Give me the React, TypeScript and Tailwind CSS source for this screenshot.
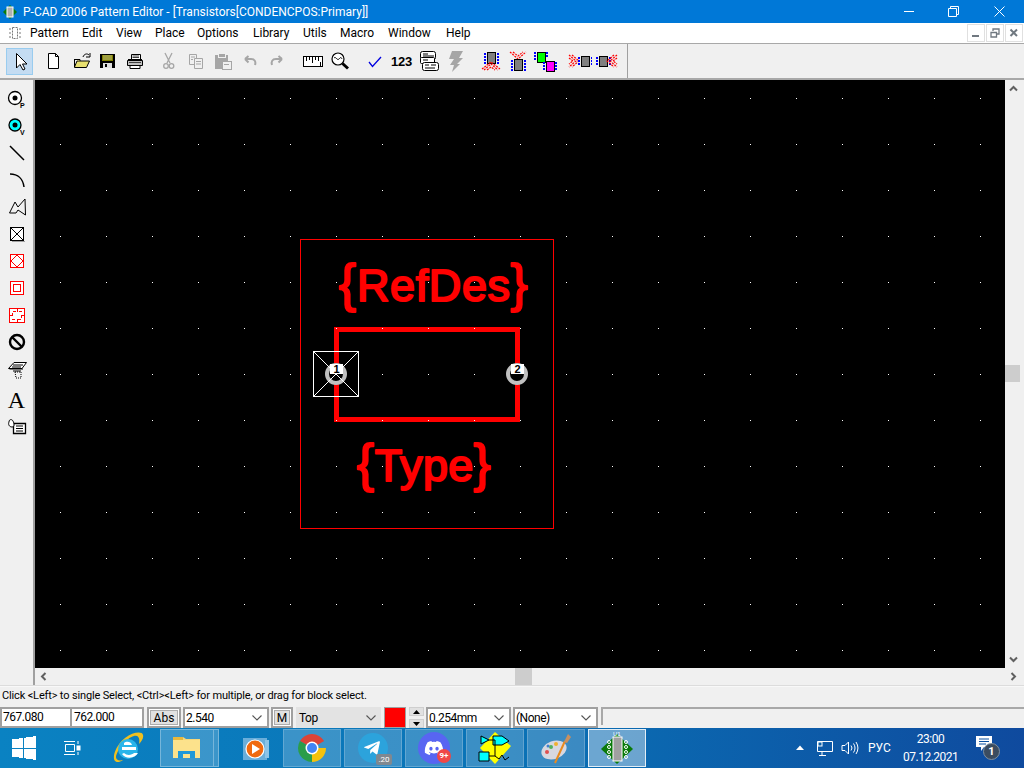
import React from "react";
import { FaDiscord, FaTelegramPlane } from "react-icons/fa";

const Ic = ({ children, w = 24 }: { children: React.ReactNode; w?: number }) => (
  <svg width={w} height={24} viewBox={`0 0 ${w} 24`} className="block">{children}</svg>
);

const Chip = ({ x, y, w = 8, h = 11, fill = "#808080", dot = "#0000ff" }: { x: number; y: number; w?: number; h?: number; fill?: string; dot?: string }) => (
  <g shapeRendering="crispEdges">
    <rect x={x} y={y} width={w} height={h} fill={fill} stroke="#000" />
    {[1, 4, 7, 10].filter((d) => d < h).map((d) => (
      <g key={d}>
        <rect x={x - 3} y={y + d} width={2} height={2} fill={dot} />
        <rect x={x + w + 2} y={y + d} width={2} height={2} fill={dot} />
      </g>
    ))}
  </g>
);

const Chevrons = ({ pts, }: { pts: string[] }) => (
  <g fill="none" stroke="#ff0000" strokeWidth="1.200" strokeDasharray="2 1">
    {pts.map((p) => <polyline key={p} points={p} />)}
  </g>
);

const top: React.ReactNode[] = [
  <Ic key="new"><path d="M6.500 4.500H13.500L16.500 7.500V19.500H6.500Z" fill="#fff" stroke="#000" /><path d="M13.500 4.500V7.500H16.500" fill="none" stroke="#000" /></Ic>,
  <Ic key="open">
    <path d="M5.500 10V18.500H17.500L20.500 12H8L5.500 18" fill="#e8e070" stroke="#000" />
    <path d="M5.500 10.500H11V12" fill="#c0b040" stroke="#000" />
    <path d="M14 8C15 5 18 4 20 6" fill="none" stroke="#000" /><path d="M21 4V8H17" fill="none" stroke="#000" />
  </Ic>,
  <Ic key="save">
    <g shapeRendering="crispEdges"><rect x="4" y="5" width="15" height="14" fill="#000" /><rect x="6" y="6" width="11" height="6" fill="#808000" /><rect x="7" y="6" width="9" height="5" fill="#a0a040" /><rect x="7" y="14" width="9" height="5" fill="#e0e0e0" /><rect x="9" y="15" width="2" height="3" fill="#000" /></g>
  </Ic>,
  <Ic key="print">
    <path d="M8.500 5.500H17.500V10.500H8.500Z" fill="#fff" stroke="#000" />
    <path d="M4.500 11.500H19.500V16.500H4.500Z" fill="#c0c0c0" stroke="#000" /><path d="M5 10.500H19" stroke="#000" />
    <path d="M7 16.500H17V19.500H7Z" fill="#fff" stroke="#000" /><path d="M9.500 7H16M9.500 8.500H16M6 13.500H18" stroke="#404040" />
  </Ic>,
  "s7",
  <Ic key="cut"><g fill="none" stroke="#a6a6a6" strokeWidth="1.300"><path d="M8 4L13 14M15 4L10 14" /><circle cx="9" cy="17" r="2.300" /><circle cx="14.500" cy="17" r="2.300" /></g></Ic>,
  <Ic key="copy"><g fill="#f0f0f0" stroke="#a6a6a6"><path d="M5.500 5.500H12.500V15.500H5.500Z" /><path d="M10.500 9.500H18.500V19.500H10.500Z" /><path d="M7 8H11M7 10.500H9M12 12.500H17M12 15H17" /></g></Ic>,
  <Ic key="paste"><g shapeRendering="crispEdges"><rect x="4" y="6" width="13" height="14" fill="#a6a6a6" /><rect x="7" y="4" width="7" height="4" fill="#a6a6a6" stroke="#f0f0f0" /><rect x="11" y="12" width="9" height="8" fill="#f0f0f0" stroke="#a6a6a6" /><rect x="13" y="15" width="5" height="1" fill="#a6a6a6" /></g></Ic>,
  <Ic key="undo"><path d="M7 10H13C17 10 18 13 17 16M7 10L10.500 7M7 10L10.500 13.500" fill="none" stroke="#a6a6a6" strokeWidth="2" /></Ic>,
  <Ic key="redo"><path d="M17 10H11C7 10 6 13 7 16M17 10L13.500 7M17 10L13.500 13.500" fill="none" stroke="#a6a6a6" strokeWidth="2" /></Ic>,
  "s9",
  <Ic key="ruler"><g shapeRendering="crispEdges"><rect x="2.500" y="7.500" width="19" height="10" fill="#fff" stroke="#000" /><path d="M5.500 8V12M8.500 8V11M11.500 8V14M14.500 8V11M17.500 8V12M19.500 13V17" stroke="#000" /></g><rect x="3" y="17" width="19" height="1" fill="#000" /></Ic>,
  <Ic key="mag"><circle cx="10" cy="10" r="6" fill="#fff" stroke="#000" strokeWidth="1.200" /><path d="M6 9C8 7 9 12 11 10S13 8 14 10" fill="none" stroke="#000" /><path d="M14.500 14.500L20 19.500" stroke="#000" strokeWidth="3" /></Ic>,
  "s8",
  <Ic key="check"><path d="M6 13L9.500 17.500L18 8" fill="none" stroke="#0000e0" strokeWidth="1.300" /></Ic>,
  <div key="123" className="w-[27px] text-center font-['Liberation_Sans',sans-serif] font-bold text-[13px] leading-none text-black tracking-[-0.2px]">123</div>,
  <Ic key="cards"><g fill="#fff" stroke="#000"><rect x="3.500" y="2.500" width="15" height="8" rx="2" /><rect x="3.500" y="8.500" width="14" height="6" rx="1" /><rect x="5.500" y="13.500" width="16" height="8" rx="2" /></g><path d="M6 5H11M6 7H17M6 11H11M8 16H12M14 16H19M8 19H18" stroke="#000" /></Ic>,
  <Ic key="flash"><path d="M8 2H19L15 9H19L13 15H16L8 23L10 16H6L10 10H5Z" fill="#a6a6a6" /></Ic>,
  "s8",
  <Ic key="c1"><Chip x={8} y={3} /><Chevrons pts={["5,21 12,15 19,21", "8,21 12,18 16,21", "3,20 12,13 21,20"]} /></Ic>,
  <Ic key="c2"><Chevrons pts={["4,3 12,10 20,3", "7,3 12,7 17,3"]} /><Chip x={8} y={10} /></Ic>,
  <Ic key="c3"><g shapeRendering="crispEdges"><rect x="4" y="3" width="8" height="10" fill="#00ff00" stroke="#000" /><rect x="13" y="12" width="8" height="10" fill="#ff00ff" stroke="#000" /><path d="M1 4H3M1 7H3M1 10H3M13 4H15M13 7H15M10 14H12M10 17H12M10 20H12M22 14H24M22 17H24M22 20H24" stroke="#0000ff" strokeWidth="2" /></g></Ic>,
  "s8",
  <Ic key="c4"><Chevrons pts={["1,6 8,12 1,18", "1,9 5,12 1,15", "4,6 11,12 4,18"]} /><Chip x={13} y={7} h={10} /></Ic>,
  <Ic key="c5"><Chip x={4} y={7} h={10} /><Chevrons pts={["22,6 15,12 22,18", "22,9 18,12 22,15", "19,6 12,12 19,18"]} /></Ic>,
];

const left: React.ReactNode[] = [
  <Ic key="1"><circle cx="10" cy="11" r="6.500" fill="#fff" stroke="#000" strokeWidth="1.300" /><circle cx="10" cy="11" r="2.500" fill="#000" /><text x="15" y="21" fontSize="7" fontWeight="700" fontFamily="Liberation Sans">P</text></Ic>,
  <Ic key="2"><circle cx="10" cy="11" r="6" fill="#00ffff" stroke="#000" strokeWidth="1.300" /><circle cx="10" cy="11" r="2.500" fill="#000" /><text x="15" y="21" fontSize="7" fontWeight="700" fontFamily="Liberation Sans">V</text></Ic>,
  <Ic key="3"><path d="M5 5L19 19" stroke="#000" strokeWidth="1.500" /></Ic>,
  <Ic key="4"><path d="M5 6C13 6 18 11 19 19" fill="none" stroke="#000" strokeWidth="1.500" /></Ic>,
  <Ic key="5"><path d="M4.500 18L10 7L13 12L20 4L20.500 20L13 15L11 18Z" fill="none" stroke="#000" /></Ic>,
  <Ic key="6"><g shapeRendering="crispEdges"><rect x="5.500" y="5.500" width="13" height="13" fill="#fff" stroke="#000" strokeWidth="1.300" /><rect x="7" y="19" width="13" height="1" fill="#a0a0a0" /></g><path d="M5.500 5.500L18.500 18.500M18.500 5.500L5.500 18.500" stroke="#000" /></Ic>,
  <Ic key="7"><rect x="5.500" y="5.500" width="13" height="13" fill="#fff" stroke="#f00" strokeWidth="1.300" shapeRendering="crispEdges" /><path d="M12 6L18 12L12 18L6 12Z" fill="none" stroke="#f00" /></Ic>,
  <Ic key="8"><rect x="5.500" y="5.500" width="13" height="13" fill="#fff" stroke="#f00" strokeWidth="1.300" shapeRendering="crispEdges" /><rect x="8.500" y="8.500" width="7" height="7" fill="none" stroke="#f00" shapeRendering="crispEdges" /></Ic>,
  <Ic key="9"><g shapeRendering="crispEdges"><rect x="4.500" y="5.500" width="15" height="14" fill="#fff" stroke="#f00" /><path d="M12 5V9M12 16V20M4 12.500H8M16 12.500H20" stroke="#f00" /><rect x="7.500" y="8.500" width="9" height="8" fill="none" stroke="#f00" strokeDasharray="3 3" /></g></Ic>,
  <Ic key="10"><circle cx="12" cy="12" r="7" fill="none" stroke="#000" strokeWidth="2.400" /><path d="M7 7L17 17" stroke="#000" strokeWidth="2.400" /></Ic>,
  <Ic key="11"><path d="M3.500 11.500L9 5.500H21.500L17 11.500Z" fill="#fff" stroke="#000" /><path d="M8 8H18M7 10H16" stroke="#000" /><path d="M4.500 12H18M8 14H16" stroke="#000" /><path d="M10 15H16V21H11Z" fill="none" stroke="#000" strokeDasharray="1 1" /></Ic>,
  "s4",
  <div key="A" className="text-[24px] leading-none font-['Liberation_Serif',serif] text-black">A</div>,
  <Ic key="13"><path d="M8.500 8.500H20.500V18.500H8.500Z" fill="#fff" stroke="#000" strokeWidth="1.300" /><path d="M11 11H18M11 13.500H18M11 16H18" stroke="#000" /><path d="M4 7C4 4 7 4 8 6S10 12 7 12S3 9 4 7Z" fill="#fff" stroke="#000" /></Ic>,
];

const menus: [string, string][] = [
  ["Pattern", "w-[52px]"], ["Edit", "w-[34px]"], ["View", "w-[39px]"], ["Place", "w-[42px]"], ["Options", "w-[56px]"],
  ["Library", "w-[50px]"], ["Utils", "w-[37px]"], ["Macro", "w-[48px]"], ["Window", "w-[58px]"], ["Help", "w-[40px]"],
];

const Combo = ({ text, w, grey }: { text: string; w: string; grey?: boolean }) => (
  <div className={`${w} h-[21px] flex items-center justify-between pr-[4px] ${grey ? "bg-[#e3e3e3] pl-[3px]" : "bg-white border-2 border-[#a0a0a0] pl-[1px]"}`}>
    <span className="text-[12px] tracking-[-0.5px] text-black">{text}</span>
    <svg width="12" height="8" viewBox="0 0 12 8"><path d="M1.500 1.500L6 6L10.500 1.500" fill="none" stroke="#555" strokeWidth="1.100" /></svg>
  </div>
);

const Chev = ({ d }: { d: string }) => (
  <svg width="9" height="9" viewBox="0 0 9 9"><path d={d} fill="none" stroke="#606060" strokeWidth="2" /></svg>
);

const TB = ({ children, active }: { children: React.ReactNode; active?: boolean }) => (
  <div className={`w-[58px] h-[38px] flex items-center justify-center border ${active ? "bg-white/40 border-white/80" : "bg-white/20 border-white/20"}`}>{children}</div>
);

const PcbIcon = ({ size = 34 }: { size?: number }) => (
  <svg width={size} height={size} viewBox="0 0 34 34">
    <path d="M17 3L33 18L17 33L1 18Z" fill="#0a7a0a" />
    <rect x="13" y="6" width="9" height="24" fill="#a0a0a0" stroke="#fff" />
    {[11, 16, 21, 26].map((y) => (
      <g key={y}><circle cx="9" cy={y} r="1.500" fill="none" stroke="#fff" /><circle cx="26" cy={y} r="1.500" fill="none" stroke="#fff" /></g>
    ))}
    <text x="13" y="5" fontSize="6" fill="#fff" fontFamily="Liberation Sans">U1</text>
  </svg>
);

export default function App() {
  return (
    <div className="w-[1024px] h-[768px] overflow-hidden flex flex-col bg-[#f0f0f0] font-['Roboto',sans-serif] text-black">
      {/* title bar */}
      <div className="h-[23px] bg-[#0078d7] flex items-center text-white">
        <div className="w-[23px] pl-[3px]"><svg width="14" height="14" viewBox="0 0 14 14"><path d="M7 0L14 7L7 14L0 7Z" fill="#0a7a0a" /><rect x="4" y="2" width="6" height="10" fill="#b0b0b0" stroke="#fff" /></svg></div>
        <span className="text-[12px]">P-CAD 2006 Pattern Editor - [Transistors[CONDENCPOS:Primary]]</span>
        <div className="ml-auto flex items-center">
          <div className="w-[46px] mr-[4px] flex justify-center"><div className="w-[10px] h-px bg-white" /></div>
          <div className="w-[34px] flex justify-center"><svg width="11" height="11" viewBox="0 0 11 11"><path d="M.5 2.500H8.500V10.500H.5ZM2.500 2.500V.5H10.500V8.500H8.500" fill="none" stroke="#fff" /></svg></div>
          <div className="w-[46px] pl-[12px] mr-[8px] flex justify-center"><svg width="11" height="11" viewBox="0 0 11 11"><path d="M.5.5L10.500 10.500M10.500.5L.5 10.500" fill="none" stroke="#fff" /></svg></div>
        </div>
      </div>
      {/* menu */}
      <div className="h-[20px] bg-white flex items-center">
        <div className="w-[30px] pl-[8px]"><svg width="14" height="14" viewBox="0 0 14 14"><g fill="none" stroke="#777" strokeDasharray="2 1"><rect x="4.500" y="1.500" width="5" height="11" /><path d="M1 3H3M1 7H3M1 11H3M11 3H13M11 7H13M11 11H13" /></g></svg></div>
        {menus.map(([m, w]) => <div key={m} className={`${w} text-[12px] leading-[20px]`}>{m}</div>)}
        <div className="ml-auto flex items-center gap-px mr-px">
          {["min", "res", "close"].map((b) => (
            <div key={b} className="w-[18px] h-[18px] border border-[#e0e0e0] bg-white flex items-center justify-center">
              <svg width="10" height="10" viewBox="0 0 10 10">
                {b === "min" && <rect x="1" y="7" width="7" height="2" fill="#707880" />}
                {b === "res" && <path d="M1 4.500H6.500V9H1ZM3 3V1H9V6H7" fill="none" stroke="#707880" strokeWidth="1.300" />}
                {b === "close" && <path d="M1.500 1.500L8 8M8 1.500L1.500 8" fill="none" stroke="#707880" strokeWidth="2" />}
              </svg>
            </div>
          ))}
        </div>
      </div>
      {/* toolbar */}
      <div className="h-[37px] border-t border-[#a8a8a8] border-b-2 flex items-center pl-[6px] bg-[#f0f0f0]">
        <div className="w-[27px] h-[27px] bg-[#c4dcf2] border border-[#99ccef] flex items-center justify-center shrink-0">
          <svg width="24" height="24" viewBox="0 0 24 24"><path d="M8.500 4.500V19L12 15.500L15 21L17 20L14.500 15H19Z" fill="#fff" stroke="#000" /></svg>
        </div>
        <div className="w-[7px]" />
        {top.map((t, i) => {
          if (t === "s7") return <div key={i} className="w-[7px]" />;
          if (t === "s8") return <div key={i} className="w-[8px]" />;
          if (t === "s9") return <div key={i} className="w-[9px]" />;
          return <div key={i} className="w-[27px] shrink-0 flex justify-center">{t}</div>;
        })}
        <div className="ml-[7px] h-[34px] w-px bg-[#a0a0a0]" />
      </div>
      {/* middle */}
      <div className="flex h-[605px]">
        <div className="w-[35px] border-r-2 border-[#a0a0a0] flex flex-col items-center pt-[5px] shrink-0">
          {left.map((t, i) => t === "s4" ? <div key={i} className="h-[4px]" /> : <div key={i} className="h-[27px] w-[27px] flex items-center justify-center shrink-0">{t}</div>)}
        </div>
        <div className="flex flex-col w-[989px]">
          <div className="flex h-[588px]">
            <svg width="970" height="588" viewBox="35 80 970 588" className="block bg-black shrink-0">
              <defs>
                <pattern id="dots" x="60" y="98" width="46" height="46" patternUnits="userSpaceOnUse">
                  <rect x="0" y="0" width="1" height="1" fill="#fff" />
                </pattern>
              </defs>
              <rect x="300.500" y="239.500" width="253" height="289" fill="none" stroke="#f00" shapeRendering="crispEdges" />
              <rect x="336.500" y="329.500" width="181" height="90" fill="none" stroke="#f00" strokeWidth="5" shapeRendering="crispEdges" />
              <rect x="35" y="80" width="970" height="588" fill="url(#dots)" />
              <g fill="#f00" stroke="#f00" strokeWidth="2" strokeLinejoin="round" fontFamily="Liberation Sans, sans-serif" fontSize="45">
                <text x="339" y="301" textLength="189" lengthAdjust="spacing"><tspan fontSize="52">{"{"}</tspan>RefDes<tspan fontSize="52">{"}"}</tspan></text>
                <text x="357" y="481" textLength="134" lengthAdjust="spacing"><tspan fontSize="52">{"{"}</tspan>Type<tspan fontSize="52">{"}"}</tspan></text>
              </g>
              {/* pad 1 */}
              <circle cx="336" cy="374" r="9" fill="#000" stroke="#c0c0c0" strokeWidth="4" />
              <g stroke="#fff" shapeRendering="crispEdges"><rect x="313.500" y="351.500" width="45" height="45" fill="none" /></g>
              <path d="M314 352L358 396M358 352L314 396" stroke="#fff" />
              <rect x="330" y="364" width="13" height="10" fill="#fff" />
              <text x="336.500" y="373" fontSize="11" textAnchor="middle" fontFamily="Liberation Sans, sans-serif" fontWeight="700" fill="#000">1</text>
              {/* pad 2 */}
              <circle cx="517" cy="374" r="9" fill="#000" stroke="#c0c0c0" strokeWidth="4" />
              <rect x="511" y="364" width="13" height="10" fill="#fff" />
              <text x="517.500" y="373" fontSize="11" textAnchor="middle" fontFamily="Liberation Sans, sans-serif" fontWeight="700" fill="#000">2</text>
            </svg>
            <div className="w-[17px] h-full bg-[#f0f0f0] flex flex-col items-center justify-between py-1 relative">
              <Chev d="M1 6.500L4.500 3L8 6.500" />
              <div className="absolute left-0 top-[285px] w-[15px] h-[17px] bg-[#cdcdcd]" />
              <Chev d="M1 2.500L4.500 6L8 2.500" />
            </div>
          </div>
          <div className="h-[17px] bg-[#f0f0f0] flex items-center justify-between px-1 relative w-[987px]">
            <Chev d="M6.500 1L3 4.500L6.500 8" />
            <div className="absolute left-[480px] top-0 w-[17px] h-[17px] bg-[#cdcdcd]" />
            <Chev d="M2.500 1L6 4.500L2.500 8" />
          </div>
        </div>
      </div>
      {/* status */}
      <div className="h-[22px] border-t border-[#dcdcdc] flex items-center pl-[2px] text-[11px] tracking-[-0.15px]" style={{ boxShadow: "inset 0 1px 0 #f8f8f8" }}>
        Click &lt;Left&gt; to single Select, &lt;Ctrl&gt;&lt;Left&gt; for multiple, or drag for block select.
      </div>
      {/* inputs */}
      <div className="h-[21px] flex items-start text-[12px]">
        <div className="w-[72px] h-[21px] bg-white border-2 border-[#a0a0a0] pl-[1px] leading-[16px] tracking-[-0.5px]">767.080</div>
        <div className="w-[72px] h-[21px] bg-white border-2 border-l-0 border-[#a0a0a0] pl-[2px] leading-[16px] tracking-[-0.5px]">762.000</div>
        <div className="ml-[3px] w-[34px] h-[21px] bg-white border-2 border-[#a0a0a0] p-[1px] flex"><div className="flex-1 bg-[#e1e1e1] border border-[#adadad] flex items-center justify-center text-[12px] leading-none">Abs</div></div>
        <div className="ml-[2px]"><Combo text="2.540" w="w-[86px]" /></div>
        <div className="ml-[2px] w-[22px] h-[21px] bg-white border-2 border-[#a0a0a0] p-[1px] flex"><div className="flex-1 bg-[#e1e1e1] border border-[#adadad] flex items-center justify-center text-[12px] leading-none">M</div></div>
        <div className="ml-[3px]"><Combo text="Top" w="w-[85px]" grey /></div>
        <div className="ml-[3px] w-[22px] h-[21px] bg-[#f00] border border-[#a0a0a0]" />
        <div className="ml-[3px] w-[15px] h-[21px] flex flex-col justify-between">
          <div className="h-[9px] bg-[#e1e1e1] border border-[#cfcfcf] flex items-center justify-center"><svg width="7" height="4" viewBox="0 0 7 4"><path d="M3.500 0L7 4H0Z" /></svg></div>
          <div className="h-[9px] bg-[#e1e1e1] border border-[#cfcfcf] flex items-center justify-center"><svg width="7" height="4" viewBox="0 0 7 4"><path d="M0 0H7L3.500 4Z" /></svg></div>
        </div>
        <div className="ml-[2px]"><Combo text="0.254mm" w="w-[85px]" /></div>
        <div className="ml-[2px]"><Combo text="(None)" w="w-[85px]" /></div>
        <div className="ml-[3px] flex-1 h-[18px] border-t-2 border-l-2 border-[#a8a8a8] bg-[#f0f0f0]" />
      </div>
      {/* taskbar */}
      <div className="h-[40px] flex items-center bg-gradient-to-r from-[#0a82c2] via-[#0a72b6] to-[#0f4a9e] text-white">
        <div className="w-[48px] flex justify-center">
          <svg width="24" height="24" viewBox="0 0 24 24" fill="#fff" shapeRendering="crispEdges"><path d="M0 3.500L10.500 2V11.500H0ZM12 1.800L24 0V11.500H12ZM0 13H10.500V22L0 20.500ZM12 13H24V24L12 22.200Z" /></svg>
        </div>
        <div className="w-[48px] flex justify-center">
          <svg width="18" height="16" viewBox="0 0 18 16" fill="none" stroke="#fff"><path d="M1 1.500H12M1 14.500H12M2.500 4.500H11.500V11.500H2.500Z" /><path d="M15 1V4M15 12V15" /><rect x="14" y="6" width="3" height="4" fill="#fff" /></svg>
        </div>
        <div className="w-[64px] flex justify-center">
          <svg width="32" height="32" viewBox="0 0 32 32">
            <path d="M3 29C0 26 3 14 13 6C21 0 30-1 31 3C32 6 29 10 27 12C28 7 27 3 22 4C14 6 5 18 4 25C4 28 7 29 11 28C7 31 4 30 3 29Z" fill="#f0c020" />
            <circle cx="16" cy="17" r="10" fill="#2ab5ea" />
            <rect x="10" y="15" width="14" height="3" fill="#fff" />
            <path d="M12 11C14 9 19 9 20 13H12ZM12 21C15 24 20 23 22 21H26C23 27 13 27 10 22Z" fill="#fff" />
          </svg>
        </div>
        <div className="w-[54px] h-[38px] bg-white/20 border border-white/30 flex items-center justify-center">
          <svg width="30" height="26" viewBox="0 0 30 26"><path d="M1 2H11L14 4H28V23H1Z" fill="#f5d77a" /><path d="M1 2H11V5H1Z" fill="#e8b83c" /><rect x="1" y="5" width="27" height="18" fill="#fce28c" /><path d="M6 23V16H23V23H18V19H11V23Z" fill="#1e98d8" /></svg>
        </div>
        <div className="w-[5px] h-[38px] bg-white/20 border border-white/30 border-l-0" />
        <div className="ml-[10px] w-[54px] h-[38px] flex items-center justify-center">
          <svg width="28" height="28" viewBox="0 0 28 28"><rect x="1" y="4" width="24" height="22" fill="#6aaeda" /><rect x="23" y="6" width="4" height="18" fill="#8cc4e8" /><circle cx="13" cy="15" r="9" fill="#f06a10" stroke="#fff" strokeWidth="1.200" /><path d="M10 10L18 15L10 20Z" fill="#fff" /></svg>
        </div>
        <TB>
          <svg width="30" height="30" viewBox="0 0 30 30">
            <path d="M15 15L2.900 8A14 14 0 0 1 27.100 8Z" fill="#db4437" />
            <path d="M15 15H29A14 14 0 0 1 15 29Z" fill="#f4c20d" />
            <path d="M15 15L15 29A14 14 0 0 1 2.900 8Z" fill="#2a9d4a" />
            <circle cx="15" cy="15" r="6.500" fill="#fff" /><circle cx="15" cy="15" r="5" fill="#4285f4" />
          </svg>
        </TB>
        <div className="w-[3px]" />
        <TB>
          <div className="relative w-[30px] h-[30px] rounded-full bg-[#2ca3dc] flex items-center justify-center">
            <FaTelegramPlane className="text-white text-[18px] -ml-[3px]" />
            <div className="absolute -right-[4px] -bottom-[2px] w-[16px] h-[11px] rounded-[2px] bg-[#808890] text-[8px] leading-[11px] text-center text-white">.20</div>
          </div>
        </TB>
        <div className="w-[3px]" />
        <TB>
          <div className="relative w-[32px] h-[32px] rounded-full bg-[#5865f2] flex items-center justify-center">
            <FaDiscord className="text-white text-[20px]" />
            <div className="absolute -right-[1px] bottom-[1px] w-[14px] h-[14px] rounded-full bg-[#f04747] text-[8px] font-bold leading-[14px] text-center text-white">9+</div>
          </div>
        </TB>
        <div className="w-[3px]" />
        <TB>
          <svg width="34" height="34" viewBox="0 0 34 34">
            <path d="M17 1L33 15L17 33L2 17Z" fill="#ffff00" />
            <path d="M3 5L11 9L3 13Z" fill="#00ffff" stroke="#000" />
            <path d="M15 5H24L31 10L24 14H15Z" fill="#00ffff" stroke="#000" />
            <path d="M1 21H11V30H1Z" fill="#00ffff" stroke="#000" />
            <path d="M11 9H17V25L21 28L24 24L27 29L31 26M11 25H17" fill="none" stroke="#000" />
          </svg>
        </TB>
        <div className="w-[3px]" />
        <TB>
          <svg width="32" height="32" viewBox="0 0 32 32">
            <ellipse cx="14" cy="18" rx="13" ry="9" fill="#d8d8e0" transform="rotate(-20 14 18)" />
            <circle cx="7" cy="20" r="2" fill="#e05050" /><circle cx="11" cy="15" r="2" fill="#50b060" /><circle cx="16" cy="12" r="2" fill="#f0b030" /><circle cx="8" cy="14" r="1.500" fill="#4080d0" />
            <path d="M15 31L25 9" stroke="#e88a20" strokeWidth="2" /><path d="M24 10L28 2L31 5L27 11Z" fill="#c89060" />
          </svg>
        </TB>
        <div className="w-[3px]" />
        <TB active><PcbIcon /></TB>
        <div className="ml-auto flex items-center text-[12px]">
          <svg width="10" height="6" viewBox="0 0 10 6" className="mr-[11px]"><path d="M5 .5L9 5H1Z" fill="#fff" /></svg>
          <svg width="18" height="16" viewBox="0 0 18 16" fill="none" stroke="#fff" className="mr-[7px]"><path d="M1.500 1.500H16.500V11.500H1.500Z" /><path d="M6 11.500V15M3 15.500H10" /><rect x="2" y="2" width="4" height="4" fill="#0a60a8" /></svg>
          <svg width="18" height="14" viewBox="0 0 18 14" fill="none" stroke="#fff" className="mr-[9px]"><path d="M1 4.500H4L7.500 1V13L4 9.500H1Z" /><path d="M10 4.500A4 4 0 0 1 10 9.500M12.500 2.500A8 8 0 0 1 12.500 11.500M15 1A11 11 0 0 1 15 13" /></svg>
          <span className="w-[22px] mr-[13px] text-[12px]">РУС</span>
          <div className="w-[55px] text-center text-[12px] leading-[18px] mr-[18px] tracking-[-0.5px]">
            <div>23:00</div>
            <div>07.12.2021</div>
          </div>
          <div className="relative w-[24px] h-[24px] mr-[24px]">
            <svg width="17" height="16" viewBox="0 0 17 16" className="absolute left-0 top-0"><path d="M0 0H16V11H8L5 15V11H0Z" fill="#fff" /><path d="M3 3H13M3 5.500H13M3 8H10" stroke="#0a50a0" /></svg>
            <div className="absolute left-[7px] top-[7px] w-[17px] h-[17px] rounded-full bg-[#3b4c60] border border-[#8090a0] text-[11px] leading-[15px] text-center font-bold text-white">1</div>
          </div>
        </div>
      </div>
    </div>
  );
}
